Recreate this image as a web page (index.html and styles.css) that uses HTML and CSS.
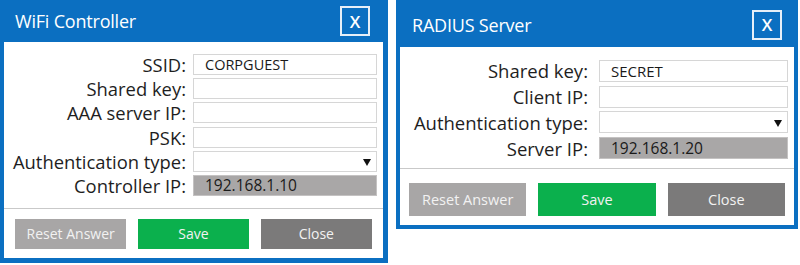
FILE: index.html
```html
<!DOCTYPE html>
<html>
<head>
<meta charset="utf-8">
<link rel="stylesheet" href="styles.css">
</head>
<body>
<div class="page">
  <section class="dialog dialog-wifi">
    <header class="titlebar">
      <span class="title">WiFi Controller</span>
      <span class="close-x">X</span>
    </header>
    <div class="body">
      <div class="form">
        <label class="lbl">SSID:</label><div class="field">CORPGUEST</div>
        <label class="lbl">Shared key:</label><div class="field"></div>
        <label class="lbl">AAA server IP:</label><div class="field"></div>
        <label class="lbl">PSK:</label><div class="field"></div>
        <label class="lbl">Authentication type:</label><div class="field select"><span class="arrow"></span></div>
        <label class="lbl">Controller IP:</label><div class="field readonly">192.168.1.10</div>
      </div>
      <div class="actions">
        <button class="btn btn-reset">Reset Answer</button>
        <button class="btn btn-save">Save</button>
        <button class="btn btn-close">Close</button>
      </div>
    </div>
  </section>
  <section class="dialog dialog-radius">
    <header class="titlebar">
      <span class="title">RADIUS Server</span>
      <span class="close-x">X</span>
    </header>
    <div class="body">
      <div class="form">
        <label class="lbl">Shared key:</label><div class="field">SECRET</div>
        <label class="lbl">Client IP:</label><div class="field"></div>
        <label class="lbl">Authentication type:</label><div class="field select"><span class="arrow"></span></div>
        <label class="lbl">Server IP:</label><div class="field readonly">192.168.1.20</div>
      </div>
      <div class="actions">
        <button class="btn btn-reset">Reset Answer</button>
        <button class="btn btn-save">Save</button>
        <button class="btn btn-close">Close</button>
      </div>
    </div>
  </section>
</div>
</body>
</html>
```
FILE: styles.css
```css
* { box-sizing: border-box; }
html, body { margin: 0; padding: 0; background: #ffffff; }
body { font-family: "Open Sans", "Noto Sans", sans-serif; color: #222; }

.page {
  display: flex;
  align-items: flex-start;
  gap: 8px;
  width: 800px;
  height: 265px;
  overflow: hidden;
}

.dialog {
  background: #0b6fc1;
  display: flex;
  flex-direction: column;
}
.dialog-wifi { width: 388px; height: 263px; padding: 0 5px 5px 4px; }
.dialog-radius { width: 402px; height: 229px; padding: 0 4px 4px 4px; }

.titlebar {
  display: flex;
  align-items: center;
  justify-content: space-between;
  color: #fff;
}
.dialog-wifi .titlebar { height: 42px; padding: 0 13px 0 11px; }
.dialog-radius .titlebar { height: 47px; padding: 3px 12px 0 12px; }

.title { font-size: 18px; letter-spacing: -0.2px; }

.close-x {
  width: 30px;
  height: 30px;
  border: 2px solid #e6eff8;
  display: flex;
  align-items: center;
  justify-content: center;
  font-size: 17px;
  font-weight: 600;
}

.body {
  flex: 1;
  background: #fff;
  display: flex;
  flex-direction: column;
}

.form {
  display: grid;
  border-bottom: 1px solid #c9c9c9;
}
.dialog-wifi .form {
  grid-template-columns: 189px 184px;
  grid-auto-rows: 21px;
  row-gap: 3.2px;
  padding: 12px 0 12px 0;
}
.dialog-radius .form {
  grid-template-columns: 199px 189px;
  grid-auto-rows: 22px;
  row-gap: 3.7px;
  padding: 13px 0 9px 0;
}

.lbl {
  text-align: right;
  white-space: nowrap;
  display: flex;
  align-items: center;
  justify-content: flex-end;
  color: #1e1e1e;
}
.dialog-wifi .lbl { font-size: 18.4px; padding-right: 7px; }
.dialog-radius .lbl { font-size: 18.5px; padding-right: 11px; }

.field {
  position: relative;
  border: 1px solid #d6d6d6;
  background: #fff;
  display: flex;
  align-items: center;
  font-size: 14.5px;
  font-weight: 500;
  color: #1a1a1a;
  padding-left: 11px;
}
.dialog-radius .field { font-size: 15px; }
.field.readonly { background: #a9a7a7; border-color: #c4c2c2; font-size: 15.5px; }

.arrow {
  position: absolute;
  right: 5px;
  top: 50%;
  margin-top: -2px;
  width: 0;
  height: 0;
  border-left: 4.5px solid transparent;
  border-right: 4.5px solid transparent;
  border-top: 7px solid #111;
}

.actions {
  display: grid;
  grid-template-columns: 1fr 1fr 1fr;
}
.dialog-wifi .actions { padding: 10px 11px 9px 11px; column-gap: 11.5px; grid-auto-rows: 30px; }
.dialog-radius .actions { padding: 14px 9px 9px 9px; column-gap: 12px; grid-auto-rows: 33px; }

.btn {
  border: none;
  font-family: "Open Sans", "Noto Sans", sans-serif;
  font-size: 14px;
  color: #f2f2f2;
  padding: 0;
  margin: 0;
}
.dialog-radius .btn { font-size: 14.5px; }
.btn-reset { background: #a8a6a6; }
.btn-save { background: #0bb04d; }
.btn-close { background: #7b7a7a; }
```
